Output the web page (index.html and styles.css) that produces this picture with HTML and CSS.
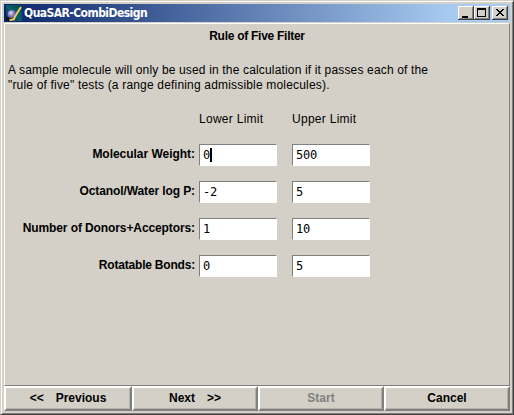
FILE: index.html
```html
<!DOCTYPE html>
<html lang="en">
<head>
<meta charset="utf-8">
<title>QuaSAR-CombiDesign</title>
<link rel="stylesheet" href="styles.css">
</head>
<body>
<div class="window">
  <header class="titlebar">
    <svg class="app-icon" width="16" height="16" viewBox="0 0 16 16">
      <defs>
        <linearGradient id="bg" x1="0" y1="1" x2="1" y2="0"><stop offset="0" stop-color="#052b35"/><stop offset=".5" stop-color="#08606a"/><stop offset="1" stop-color="#04424c"/></linearGradient>
        <radialGradient id="ball" cx=".4" cy=".35" r=".65"><stop offset="0" stop-color="#e0dcff"/><stop offset=".5" stop-color="#8b82c8"/><stop offset="1" stop-color="#4c3d80"/></radialGradient>
      </defs>
      <rect width="16" height="16" fill="url(#bg)"/>
      <path d="M0 12h5v4H0z" fill="#14151c"/>
      <circle cx="5.8" cy="9.3" r="4.3" fill="url(#ball)"/>
      <path d="M15 2 9 11.5 7.5 15M3.5 15.2 8 14.2" fill="none" stroke="#edc95e" stroke-width="2"/>
    </svg>
    <span class="title">QuaSAR-CombiDesign</span>
    <div class="controls">
      <svg class="control" width="16" height="14" shape-rendering="crispEdges"><path d="M4 10h6v2H4z"/></svg>
      <svg class="control" width="16" height="14" shape-rendering="crispEdges"><path fill-rule="evenodd" d="M3 2h9v9H3zM4 4v6h7V4z"/></svg>
      <svg class="control close" width="16" height="14" shape-rendering="crispEdges"><path d="M4 3h2v1h1v1h2V4h1V3h2v1h-1v1h-1v1H9v1h1v1h1v1h1v1h-2V9H9V8H7v1H6v1H4V9h1V8h1V7h1V6H6V5H5V4H4z"/></svg>
    </div>
  </header>
  <main class="panel">
    <h1 class="heading">Rule of Five Filter</h1>
    <p class="intro"><span class="line-one">A sample molecule will only be used in the calculation if it passes each of the</span><br><span class="line-two">"rule of five" tests (a range defining admissible molecules).</span></p>
    <div class="form">
      <span></span><span class="column">Lower Limit</span><span class="column">Upper Limit</span>
      <span class="label weight">Molecular Weight:</span><div class="field">0<i class="caret"></i></div><div class="field">500</div>
      <span class="label">Octanol/Water log P:</span><div class="field">-2</div><div class="field">5</div>
      <span class="label">Number of Donors+Acceptors:</span><div class="field">1</div><div class="field">10</div>
      <span class="label bonds">Rotatable Bonds:</span><div class="field">0</div><div class="field">5</div>
    </div>
  </main>
  <footer class="actions">
    <button class="action">&lt;&lt;<span class="word-after">Previous</span></button>
    <button class="action">Next<span class="word-after">&gt;&gt;</span></button>
    <button class="action" disabled>Start</button>
    <button class="action">Cancel</button>
  </footer>
</div>
</body>
</html>
```
FILE: styles.css
```css
* { box-sizing: border-box; }
body { margin: 0; overflow: hidden; background: #d4d0c8; color: #000; font: 12px/15px "Liberation Sans", sans-serif; }
.window {
  display: flex; flex-direction: column; width: 514px; height: 415px; padding: 3px;
  border: 1px solid; border-color: #d4d0c8 #404040 #404040 #d4d0c8;
  box-shadow: inset 1px 1px #fff, inset -1px -1px #808080;
}
.titlebar { display: flex; align-items: center; flex: none; height: 18px; padding: 0 2px; background: linear-gradient(90deg, #0a246a, #a6caf0 88%); }
.app-icon { flex: none; }
.title { margin-left: 2px; color: #fff; font: bold 12px/18px "DejaVu Sans Condensed", "DejaVu Sans", sans-serif; font-stretch: condensed; letter-spacing: -.55px; white-space: nowrap; }
.controls { display: flex; margin-left: auto; }
.control { background: #d4d0c8; box-shadow: inset -1px -1px #404040, inset 1px 1px #fff, inset -2px -2px #808080; }
.close { margin-left: 2px; }
.panel { flex: 1; margin-top: 1px; border: 1px solid; border-color: #fff #808080 #808080 #fff; }
.heading { margin: 5px 0 0; font-size: 12px; line-height: 15px; text-align: center; letter-spacing: -.27px; }
.intro { margin: 19px 0 0 3px; white-space: nowrap; }
.line-one { letter-spacing: .16px; }
.line-two { letter-spacing: .18px; }
.form { display: grid; grid-template-columns: 194px 93px 78px; grid-template-rows: 17px 22px 22px 22px 22px; row-gap: 15px; margin-top: 19px; }
.column { white-space: nowrap; letter-spacing: .28px; }
.label { padding: 3px 4px 0 0; text-align: right; font-weight: bold; letter-spacing: -.1px; white-space: nowrap; }
.weight { letter-spacing: -.03px; }
.bonds { letter-spacing: -.2px; }
.field { width: 78px; height: 22px; padding: 3px 0 0 3px; background: #fff; border: 1px solid; border-color: #808080 #fff #fff #808080; font: 12px/14px "DejaVu Sans Mono", monospace; letter-spacing: -.22px; }
.caret { display: inline-block; width: 2px; height: 14px; vertical-align: top; background: #000; }
.actions { display: grid; grid-template-columns: 128px 126px 126px 126px; flex: none; height: 25px; }
.action { padding: 0; color: #000; background: #d4d0c8; border: 2px solid; border-color: #fff #808080 #808080 #fff; box-shadow: inset -1px -1px #b4b1aa; font: bold 12px/15px "Liberation Sans", sans-serif; }
.action:disabled { color: #808080; }
.word-after { margin-left: 12px; }
```
